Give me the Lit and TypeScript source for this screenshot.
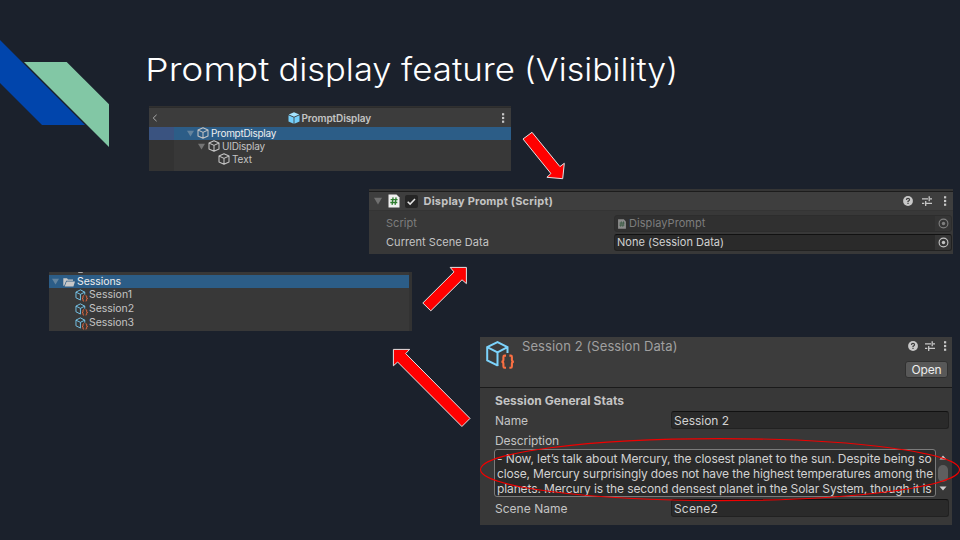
import { LitElement, html, css, svg } from "lit";
import { customElement } from "lit/decorators.js";
import { styleMap } from "lit/directives/style-map.js";

const pen = document.createElement("canvas").getContext("2d")!;

/** Text tracked so that its run fills the given advance width. */
const label = (text: string, width: number, size: number, weight = 400, cls = "") => {
  pen.font = `${weight} ${size}px Inter, "Liberation Sans", sans-serif`;
  const spacing = (width - pen.measureText(text).width) / text.length;
  return html`<span
    class="label ${cls}"
    style=${styleMap({ fontSize: `${size}px`, fontWeight: `${weight}`, letterSpacing: `${spacing.toFixed(3)}px` })}
    >${text}</span
  >`;
};

const cube = (size = 12) => html`<svg width=${size} height=${size} viewBox="0 0 12 12" fill="none" stroke="#c4c4c4" stroke-width="1.05" stroke-linejoin="round">
  <path d="M6 .8 11 3v6L6 11.3 1 9V3ZM1 3l5 2.4L11 3M6 5.4v5.9" />
</svg>`;

const prefab = html`<svg width="12" height="12" viewBox="0 0 12 12">
  <path d="M6 .3 11.2 2.4 6 4.7.8 2.4Z" fill="#a5e4ff" />
  <path d="M.5 3.2 5.6 5.4v6.3L.5 9.4ZM11.5 3.2 6.4 5.4v6.3l5.1-2.3Z" fill="#74cffb" />
</svg>`;

const asset = (size: number) => html`<svg width=${size} height=${size} viewBox="0 0 30 30" fill="none">
  <path d="M13.5 25 12 25.2 2.2 20.3V7.2L12.5 2 22.5 7.2V13M2.2 7.2l10.3 5.2L22.5 7.2M12.5 12.4V25" stroke="#7cd3fb" stroke-width="2" />
  <path d="M21 15.6h-1.4q-1.2 0-1.2 1.4v2.7q0 2-2 2 2 0 2 2v2.5q0 1.5 1.2 1.5H21M24.4 15.6h1.3q1.2 0 1.2 1.4v2.7q0 2 2 2-2 0-2 2v2.5q0 1.5-1.2 1.5h-1.3" stroke="#fa6f42" stroke-width="2.1" />
</svg>`;

const fold = (w: number, color: string) => html`<svg width=${w} height=${w} viewBox="0 0 8 8"><path d="M0 .8h8L4 7.4Z" fill=${color} /></svg>`;

const dots = html`<svg width="4" height="12" viewBox="0 0 4 12" fill="#c8c8c8">
  <rect x="1" y="1.2" width="2.2" height="2.2" /><rect x="1" y="4.9" width="2.2" height="2.2" /><rect x="1" y="8.6" width="2.2" height="2.2" />
</svg>`;

const tools = html`<span class="tools">
  <svg width="10" height="10" viewBox="0 0 10 10">
    <circle cx="5" cy="5" r="4.9" fill="#c8c8c8" />
    <path d="M3.4 3.9Q3.5 2.4 5 2.4t1.6 1.4Q6.6 4.6 5 5.4V6.2M5 7v1.1" fill="none" stroke="#3c3c3c" stroke-width="1.2" />
  </svg>
  <svg width="10" height="10" viewBox="0 0 10 10" fill="none" stroke="#c8c8c8" stroke-width="1.3">
    <path d="M0 2.8h6M8 2.8h2M7.2.3v5M0 7.3h2.3M4.3 7.3H10M3.7 4.9v5" />
  </svg>
  ${dots}
</span>`;

const sheet = (w: number, h: number, paper: string, ink: string) => html`<svg width=${w} height=${h} viewBox="0 0 12 14">
  <path d="M.5.5h8l3 3v10H.5Z" fill=${paper} />
  <path d="M5.1 3.4 4.1 10.8M8.1 3.4 7.1 10.8M2.6 5.7h7M2.3 8.5h7" stroke=${ink} stroke-width="1.3" fill="none" />
</svg>`;

const picker = (color: string) => html`<span class="picker"><svg width="11" height="11" viewBox="0 0 11 11">
  <circle cx="5.5" cy="5.5" r="4.4" fill="none" stroke=${color} stroke-width="1.1" /><circle cx="5.5" cy="5.5" r="1.7" fill=${color} />
</svg></span>`;

const arrows = [
  "523,139 532,132.3 559.9,166.6 564.3,163.3 562.7,178.7 546.9,177.3 550.9,173.5",
  "422.8,303 454,271.9 450.2,267.4 466.4,267.4 466.4,283.6 462,279.8 430.8,310.8",
  "393.4,349.4 409.6,349.4 405.7,353.6 470,418.4 461.9,426.5 397.6,362 393.4,365.8",
];

const base = css`
  :host { display: block; box-sizing: border-box; color: #c4c4c4; background: #383838; font-family: Inter, "Liberation Sans", sans-serif; overflow: hidden; }
  * { box-sizing: border-box; }
  svg { display: block; flex: none; }
  .label { white-space: pre; flex: none; line-height: 1; }
  .row { display: flex; align-items: center; }
  .tools { display: flex; align-items: center; margin-left: auto; gap: 8.5px; }
  .field { display: flex; align-items: center; background: #2a2a2a; border: 1px solid #212121; border-top-color: #111; border-radius: 3px; color: #d2d2d2; }
`;

@customElement("prefab-tree")
export class PrefabTree extends LitElement {
  static styles = [base, css`
    :host { border-top: 1px solid #303030; background: linear-gradient(90deg, #333 25px, #383838 25px); }
    .head { height: 20px; background: #3c3c3c; border-top: 1px solid #2c2c2c; padding: 0 6px 0 3px; }
    .mid { display: flex; align-items: center; gap: 1.5px; margin-left: 130px; }
    .head > :last-child { margin-left: auto; }
    .row.node { height: 12.7px; gap: 2px; }
    .on { background: linear-gradient(90deg, #3a5380 25px, #2c5d87 25px); color: #eee; height: 13px; }
    .node svg:first-child:not(:nth-last-child(2)) { margin-right: 1px; }
    .l0 { padding-left: 38px; } .l1 { padding-left: 49px; } .l2 { padding-left: 69px; }
  `];
  render() {
    return html`
      <div class="row head">
        <svg width="6" height="8" viewBox="0 0 6 8"><path d="M4.6.8 1.2 4l3.4 3.2" fill="none" stroke="#aaa" /></svg>
        <span class="mid">${prefab}${label("PromptDisplay", 69.5, 10, 600)}</span>
        ${dots}
      </div>
      <div class="row node on l0">${fold(7, "#64849e")}${cube()}${label("PromptDisplay", 65, 10)}</div>
      <div class="row node l1">${fold(7, "#747474")}${cube()}${label("UIDisplay", 43, 10)}</div>
      <div class="row node l2">${cube()}${label("Text", 20, 10)}</div>
    `;
  }
}

@customElement("script-inspector")
export class ScriptInspector extends LitElement {
  static styles = [base, css`
    .edge { height: 3px; background: #353535; border-bottom: 1px solid #1c1c1c; }
    .head { height: 18.5px; background: #3e3e3e; border-bottom: 1px solid #343434; padding: 1px 6px 0 5px; }
    .check { width: 13px; height: 13px; background: #252525; border-radius: 2px; margin: 0 6px 0 5px; display: grid; place-items: center; }
    .fold { margin-right: 6px; }
    .head .label { margin-left: -0.5px; }
    .tools :last-child { margin-left: 3px; }
    .body { padding: 4.5px 1px 0 17px; display: grid; gap: 2px; }
    .line { display: grid; grid-template-columns: 228px 1fr; align-items: center; height: 17px; }
    .field { height: 17px; padding-left: 2px; }
    .dim { color: #7d7d7d; }
    .dim .field { color: #7d7d7d; background: #303030; border-color: #2d2d2d; gap: 2px; }
    .picker { margin-left: auto; width: 16px; height: 15px; background: #353535; display: grid; place-items: center; border-radius: 0 2px 2px 0; }
  `];
  render() {
    return html`
      <div class="edge"></div>
      <div class="row head">
        <span class="fold">${fold(8, "#707070")}</span>
        ${sheet(12, 14, "#f0f0f0", "#2f7d31")}
        <span class="check"><svg width="11" height="11" viewBox="0 0 11 11"><path d="m1.7 5.7 2.4 2.4L9 2.9" fill="none" stroke="#e4e4e4" stroke-width="1.5" /></svg></span>
        ${label("Display Prompt (Script)", 129.5, 11, 700)}
        ${tools}
      </div>
      <div class="body">
        <div class="line dim">${label("Script", 31, 11)}<span class="field">${sheet(10, 10, "#8b8b8b", "#3a5a44")}${label("DisplayPrompt", 76.5, 11)}${picker("#808080")}</span></div>
        <div class="line">${label("Current Scene Data", 103, 11)}<span class="field">${label("None (Session Data)", 107, 11)}${picker("#c4c4c4")}</span></div>
      </div>
    `;
  }
}

@customElement("session-folder")
export class SessionFolder extends LitElement {
  static styles = [base, css`
    :host { border-right: 3px solid #323232; }
    .top { height: 2.5px; padding-left: 29px; }
    .top i { display: block; width: 5px; height: 1px; background: #aaa; border-radius: 0 0 2px 2px; }
    .on { height: 13.5px; background: #2c5d87; color: #eee; padding: 1px 0 0 3px; gap: 2px; }
    .item { height: 13.8px; padding: 1px 0 0 26px; gap: 1px; }
    .on svg:first-child { margin-right: 2px; }
  `];
  render() {
    return html`
      <div class="top"><i></i></div>
      <div class="row on">
        ${fold(7, "#64849e")}
        <svg width="12" height="10" viewBox="0 0 12 10"><path d="M.3 8.8V1.2H4l1 1.2h5v1.4H3.2L1.2 8.8Z" fill="#c8c8c8" /><path d="M3.6 4.5H12l-1.6 4.9H1.7Z" fill="#c8c8c8" /></svg>
        ${label("Sessions", 44, 10.5)}
      </div>
      ${["Session1", "Session2", "Session3"].map((n, i) => html`<div class="row item">${asset(13)}${label(n, i ? 45 : 43, 10.5)}</div>`)}
    `;
  }
}

@customElement("session-inspector")
export class SessionInspector extends LitElement {
  static styles = [base, css`
    .head { height: 51px; background: #3c3c3c; border-bottom: 1px solid #1a1a1a; display: flex; padding: 3px 4px 0 5px; }
    .title { color: #a0a0a0; margin: 0 0 0 7px; display: flex; align-items: flex-start; }
    .side { margin-left: auto; display: flex; flex-direction: column; align-items: flex-end; gap: 9px; }
    .side .tools { margin: 0 1px 0 0; gap: 6.5px; }
    .tools :last-child { margin-left: 2px; }
    .open { width: 43px; height: 17px; background: #585858; border: 1px solid #303030; border-radius: 3px; color: #eee; display: grid; place-items: center; }
    .body { padding: 5px 3px 0 15px; }
    .line { display: grid; grid-template-columns: 176px 1fr; align-items: center; height: 18px; }
    .line .label { padding-top: 1px; }
    .field { height: 18px; padding-left: 2px; }
    .heading { height: 16px; margin-bottom: 2px; }
    .caption { height: 20px; padding-top: 3px; }
    .story { display: flex; margin: 0 0 2px -1px; height: 48px; }
    .area { width: 442px; background: #2a2a2a; border: 1px solid #7b7b7b; border-radius: 3px; padding: 1px 2px; color: #d2d2d2; overflow: hidden; }
    .area .label { display: block; line-height: 15px; }
    .bar { width: 13px; display: flex; flex-direction: column; align-items: center; padding: 6px 0 5px 1px; }
    .thumb { width: 10px; height: 17px; border-radius: 5px; background: #5f5f5f; margin: 5px 0 4px; }
  `];
  render() {
    return html`
      <div class="head">
        ${asset(30)}
        <span class="title">${label("Session 2 (Session Data)", 155.5, 13)}</span>
        <div class="side">${tools}<span class="open">${label("Open", 30, 12)}</span></div>
      </div>
      <div class="body">
        <div class="row heading">${label("Session General Stats", 129, 12, 700)}</div>
        <div class="line">${label("Name", 33, 12)}<span class="field">${label("Session 2", 55, 12)}</span></div>
        <div class="row caption">${label("Description", 64, 12)}</div>
        <div class="story">
          <div class="area">
            ${label("- Now, let’s talk about Mercury, the closest planet to the sun. Despite being so", 434.5, 12)}
            ${label("close, Mercury surprisingly does not have the highest temperatures among the", 436, 12)}
            ${label("planets. Mercury is the second densest planet in the Solar System, though it is", 434.5, 12)}
          </div>
          <div class="bar">
            <svg width="8" height="5" viewBox="0 0 7 5"><path d="M0 4.5 3.5.5 7 4.5Z" fill="#ccc" /></svg>
            <span class="thumb"></span>
            <svg width="8" height="5" viewBox="0 0 7 5"><path d="M0 .5h7L3.5 4.5Z" fill="#ccc" /></svg>
          </div>
        </div>
        <div class="line">${label("Scene Name", 72.5, 12)}<span class="field">${label("Scene2", 44, 12)}</span></div>
      </div>
    `;
  }
}

@customElement("app-root")
export class AppRoot extends LitElement {
  static styles = css`
    :host { display: block; position: relative; width: 960px; height: 540px; overflow: hidden; background: #1b212c; }
    .art { position: absolute; inset: 0; pointer-events: none; }
    .title { font-family: Inter, "Liberation Sans", sans-serif; font-size: 31.5px; font-weight: 300; fill: #fff; }
    prefab-tree { position: absolute; left: 149px; top: 106px; width: 362px; height: 65px; }
    script-inspector { position: absolute; left: 369px; top: 189px; width: 584px; height: 65px; }
    session-folder { position: absolute; left: 49px; top: 272px; width: 363px; height: 59px; }
    session-inspector { position: absolute; left: 480px; top: 337px; width: 472px; height: 188px; }
  `;
  render() {
    const words: [string, number, number][] = [["Prompt", 145.3, 124], ["display", 278.5, 113], ["feature", 401, 114], ["(Visibility)", 524, 154]];
    return html`
      <prefab-tree></prefab-tree>
      <script-inspector></script-inspector>
      <session-folder></session-folder>
      <session-inspector></session-inspector>
      <svg class="art" width="960" height="540" viewBox="0 0 960 540">
        <path d="M0 40 85 125H42L0 83Z" fill="#0145ac" />
        <path d="M24 62H66.7L109 104.3V147Z" fill="#82c7a5" />
        ${words.map(([t, x, w]) => svg`<text class="title" x=${x} y="81.3" textLength=${w} lengthAdjust="spacingAndGlyphs">${t}</text>`)}
        ${arrows.map((p) => svg`<polygon points=${p} fill="#f00" stroke="#e4e4e4" stroke-width="1" />`)}
        <ellipse cx="720" cy="469.6" rx="239.5" ry="31" fill="none" stroke="#f00000" stroke-width="1.1" />
      </svg>
    `;
  }
}
